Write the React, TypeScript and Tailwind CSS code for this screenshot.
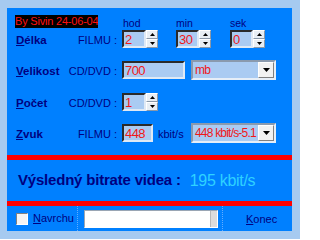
import React from "react";

const font = { fontFamily: '"Liberation Sans", Arial, sans-serif' };

function Field({ value, width }: { value: string; width: string }) {
  return (
    <div
      className={`${width} h-[18px] flex items-center bg-[#aacbf2] border-2 border-t-[#2a2a2a] border-l-[#2a2a2a] border-b-[#dfe9f5] border-r-[#dfe9f5] pl-[1px] text-[13px] leading-none tracking-[-0.6px] text-[#f01818]`}
    >
      {value}
    </div>
  );
}

function Arrow({ down }: { down?: boolean }) {
  return (
    <svg width="5" height="3" viewBox="0 0 5 3">
      <path d={down ? "M0 0H5L2.5 3Z" : "M0 3H5L2.5 0Z"} fill="#000" />
    </svg>
  );
}

function Spinner() {
  return (
    <div className="w-[12px] h-[18px] flex flex-col">
      <div className="h-[9px] flex items-center justify-center bg-[#e8eef4] border border-t-white border-l-white border-b-[#8a98a8] border-r-[#8a98a8]">
        <Arrow />
      </div>
      <div className="h-[9px] flex items-center justify-center bg-[#e8eef4] border border-t-white border-l-white border-b-[#8a98a8] border-r-[#8a98a8]">
        <Arrow down />
      </div>
    </div>
  );
}

function Combo({ value }: { value: string }) {
  return (
    <div className="w-[85px] h-[20px] flex items-center bg-[#aacbf2] border-2 border-t-[#8a9aae] border-l-[#8a9aae] border-b-[#e6eef8] border-r-[#e6eef8]">
      <div className="flex-1 pl-[2px] text-[12px] leading-none tracking-[-0.8px] text-[#f01818] whitespace-nowrap overflow-hidden">
        {value}
      </div>
      <div className="w-[16px] h-[16px] flex items-center justify-center bg-[#f2f2f2] border border-t-white border-l-white border-b-[#808080] border-r-[#808080]">
        <svg width="7" height="4" viewBox="0 0 7 4">
          <path d="M0 0H7L3.5 4Z" fill="#000" />
        </svg>
      </div>
    </div>
  );
}

function Label({ first, rest }: { first: string; rest: string }) {
  return (
    <span className="ml-[9px] mt-[4px] w-[50px] font-bold text-[11.5px] text-[#000080] whitespace-nowrap">
      <span className="underline underline-offset-[1px]">{first}</span>
      {rest}
    </span>
  );
}

function Unit({ text }: { text: string }) {
  return (
    <span className="mt-[3px] w-[51px] text-right text-[11px] text-[#000080] whitespace-nowrap">
      {text}
    </span>
  );
}

export default function App() {
  return (
    <div className="w-[300px] h-[239px] bg-[#a6caf0] pt-[8px] pl-[7px] overflow-hidden" style={font}>
      <div className="w-[285px] h-[223px] bg-[#0080ff] flex flex-col">
        {/* hlavička */}
        <div className="mt-[7px] h-[13px] flex items-center">
          <div className="ml-[8px] w-[83px] h-[13px] bg-black text-[#ff1010] text-[11px] leading-[13px] tracking-[-0.2px] whitespace-nowrap overflow-hidden">
            By Sivin 24-06-04
          </div>
          <span className="ml-[25px] mt-[4px] w-[53px] text-[10.5px] text-[#000080]">hod</span>
          <span className="mt-[4px] w-[54px] text-[10.5px] text-[#000080]">min</span>
          <span className="mt-[4px] text-[10.5px] text-[#000080]">sek</span>
        </div>

        <div className="mt-[2px] h-[18px] flex items-center">
          <Label first="D" rest="élka" />
          <Unit text="FILMU :" />
          <div className="ml-[5px] flex">
            <Field value="2" width="w-[24px]" />
            <Spinner />
          </div>
          <div className="ml-[18px] flex">
            <Field value="30" width="w-[23px]" />
            <Spinner />
          </div>
          <div className="ml-[19px] flex">
            <Field value="0" width="w-[23px]" />
            <Spinner />
          </div>
        </div>

        <div className="mt-[12px] h-[20px] flex items-center">
          <Label first="V" rest="elikost" />
          <Unit text="CD/DVD :" />
          <div className="ml-[5px]">
            <Field value="700" width="w-[63px]" />
          </div>
          <div className="ml-[6px]">
            <Combo value="mb" />
          </div>
        </div>

        <div className="mt-[13px] h-[18px] flex items-center">
          <Label first="P" rest="očet" />
          <Unit text="CD/DVD :" />
          <div className="ml-[5px] flex">
            <Field value="1" width="w-[24px]" />
            <Spinner />
          </div>
        </div>

        <div className="mt-[12px] h-[20px] flex items-center">
          <Label first="Z" rest="vuk" />
          <Unit text="FILMU :" />
          <div className="ml-[5px]">
            <Field value="448" width="w-[31px]" />
          </div>
          <span className="ml-[5px] mt-[3px] w-[33px] text-[11px] text-[#000080]">kbit/s</span>
          <Combo value="448 kbit/s-5.1" />
        </div>

        <div className="mt-[12px] h-[5px] bg-[#ff0000]" />

        <div className="h-[41px] flex items-center pl-[11px] whitespace-nowrap">
          <span className="font-bold text-[15px] tracking-[-0.2px] text-[#000080]">Výsledný bitrate videa :</span>
          <span className="ml-[9px] text-[16px] tracking-[-0.3px] text-[#2ed2ff]">195 kbit/s</span>
        </div>

        <div className="h-[5px] bg-[#ff0000]" />

        <div className="h-[25px] flex">
          <div className="w-[70px] flex items-center">
            <div className="ml-[9px] w-[12px] h-[12px] bg-[#f4f4f4] border border-t-[#808080] border-l-[#808080] border-b-white border-r-white" />
            <span className="ml-[5px] text-[11px] text-[#000080]">
              <span className="underline underline-offset-[1px]">N</span>avrchu
            </span>
          </div>
          <div className="w-[145px] flex items-center pl-[6px] border-l border-dotted border-[#63adff]">
            <div className="w-[134px] h-[18px] flex bg-white border border-t-[#9aa6b4] border-l-[#9aa6b4] border-b-white border-r-white">
              <div className="flex-1" />
              <div className="w-[7px] bg-[#dcdcdc] border-l border-[#b8b8b8]" />
            </div>
          </div>
          <div className="flex-1 flex items-center pl-[23px] border-l border-dotted border-[#63adff]">
            <span className="mt-[2px] text-[11px] text-[#000080]">
              <span className="underline underline-offset-[1px]">K</span>onec
            </span>
          </div>
        </div>
      </div>
    </div>
  );
}
